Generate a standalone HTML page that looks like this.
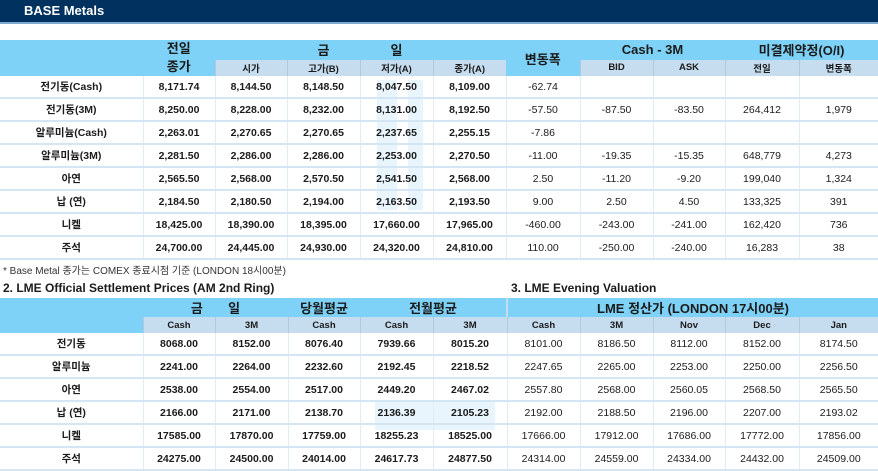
<!DOCTYPE html>
<html><head><meta charset="utf-8"><style>
body{margin:0;width:878px;height:467px;overflow:hidden;background:#fff;font-family:"Liberation Sans","Noto Sans CJK KR",sans-serif;color:#1b1b1b;position:relative}
.bar{position:absolute;left:0;top:0;width:878px;height:22px;background:#00315f;border-bottom:2px solid #7fa9d0}
.bar span{position:absolute;left:24px;top:3px;color:#fff;font-weight:bold;font-size:13px}
table{position:absolute;left:0;border-collapse:collapse;table-layout:fixed;font-size:10.5px}
td{text-align:center;padding:0;white-space:nowrap;overflow:hidden}
.h{background:#7fd2f7;font-weight:bold;font-size:13px}
.s{background:#c6dcef;font-weight:bold;font-size:9.5px;border-left:1px solid #b0c8e0}
tr.r td{height:21px;border-bottom:2px solid #d4e5f4;border-left:1px solid #e0ecf7}
tr.r td:first-child{border-left:none}
.b{font-weight:bold}
.t{position:absolute;font-weight:bold;font-size:12px}
.wm{position:absolute;background:#d8eefb;opacity:.6}
</style></head><body>
<div class="bar"><span>BASE Metals</span></div>
<div class="wm" style="left:377px;top:80px;width:20px;height:130px"></div>
<div class="wm" style="left:408px;top:80px;width:15px;height:130px"></div>
<div class="wm" style="left:375px;top:400px;width:120px;height:30px"></div>

<table style="top:40px;width:878px">
<colgroup><col style="width:143px"><col style="width:72px"><col style="width:72px"><col style="width:73px"><col style="width:73px"><col style="width:73px"><col style="width:74px"><col style="width:73px"><col style="width:72px"><col style="width:74px"><col style="width:79px"></colgroup>
<tr style="height:19px"><td class="h"></td><td class="h" rowspan="2" style="line-height:18px">전일<br>종가</td><td class="h"></td><td class="h">금</td><td class="h">일</td><td class="h"></td><td class="h" rowspan="2">변동폭</td><td class="h" colspan="2">Cash - 3M</td><td class="h" colspan="2">미결제약정(O/I)</td></tr>
<tr style="height:16px"><td class="h"></td><td class="s">시가</td><td class="s">고가(B)</td><td class="s">저가(A)</td><td class="s">종가(A)</td><td class="s">BID</td><td class="s">ASK</td><td class="s">전일</td><td class="s">변동폭</td></tr>
<tr class="r"><td class="b">전기동(Cash)</td><td class="b">8,171.74</td><td class="b">8,144.50</td><td class="b">8,148.50</td><td class="b">8,047.50</td><td class="b">8,109.00</td><td>-62.74</td><td></td><td></td><td></td><td></td></tr>
<tr class="r"><td class="b">전기동(3M)</td><td class="b">8,250.00</td><td class="b">8,228.00</td><td class="b">8,232.00</td><td class="b">8,131.00</td><td class="b">8,192.50</td><td>-57.50</td><td>-87.50</td><td>-83.50</td><td>264,412</td><td>1,979</td></tr>
<tr class="r"><td class="b">알루미늄(Cash)</td><td class="b">2,263.01</td><td class="b">2,270.65</td><td class="b">2,270.65</td><td class="b">2,237.65</td><td class="b">2,255.15</td><td>-7.86</td><td></td><td></td><td></td><td></td></tr>
<tr class="r"><td class="b">알루미늄(3M)</td><td class="b">2,281.50</td><td class="b">2,286.00</td><td class="b">2,286.00</td><td class="b">2,253.00</td><td class="b">2,270.50</td><td>-11.00</td><td>-19.35</td><td>-15.35</td><td>648,779</td><td>4,273</td></tr>
<tr class="r"><td class="b">아연</td><td class="b">2,565.50</td><td class="b">2,568.00</td><td class="b">2,570.50</td><td class="b">2,541.50</td><td class="b">2,568.00</td><td>2.50</td><td>-11.20</td><td>-9.20</td><td>199,040</td><td>1,324</td></tr>
<tr class="r"><td class="b">납 (연)</td><td class="b">2,184.50</td><td class="b">2,180.50</td><td class="b">2,194.00</td><td class="b">2,163.50</td><td class="b">2,193.50</td><td>9.00</td><td>2.50</td><td>4.50</td><td>133,325</td><td>391</td></tr>
<tr class="r"><td class="b">니켈</td><td class="b">18,425.00</td><td class="b">18,390.00</td><td class="b">18,395.00</td><td class="b">17,660.00</td><td class="b">17,965.00</td><td>-460.00</td><td>-243.00</td><td>-241.00</td><td>162,420</td><td>736</td></tr>
<tr class="r"><td class="b">주석</td><td class="b">24,700.00</td><td class="b">24,445.00</td><td class="b">24,930.00</td><td class="b">24,320.00</td><td class="b">24,810.00</td><td>110.00</td><td>-250.00</td><td>-240.00</td><td>16,283</td><td>38</td></tr>
</table>
<div style="position:absolute;left:3px;top:262px;font-size:10px;color:#333">* Base Metal 종가는 COMEX 종료시점 기준 (LONDON 18시00분)</div>
<div class="t" style="left:3px;top:281px">2. LME Official Settlement Prices (AM 2nd Ring)</div>
<div class="t" style="left:511px;top:281px">3. LME Evening Valuation</div>

<table style="top:298px;width:878px">
<colgroup><col style="width:143px"><col style="width:72px"><col style="width:73px"><col style="width:72px"><col style="width:73px"><col style="width:74px"><col style="width:73px"><col style="width:73px"><col style="width:72px"><col style="width:74px"><col style="width:79px"></colgroup>
<tr style="height:16px"><td class="h"></td><td class="h" colspan="2">금&nbsp;&nbsp;&nbsp;&nbsp;&nbsp;&nbsp;&nbsp;일</td><td class="h">당월평균</td><td class="h" colspan="2">전월평균</td><td class="h" colspan="5" style="border-left:2px solid #c6dcef">LME 정산가 (LONDON 17시00분)</td></tr>
<tr style="height:16px"><td class="h"></td><td class="s">Cash</td><td class="s">3M</td><td class="s">Cash</td><td class="s">Cash</td><td class="s">3M</td><td class="s">Cash</td><td class="s">3M</td><td class="s">Nov</td><td class="s">Dec</td><td class="s">Jan</td></tr>
<tr class="r"><td class="b">전기동</td><td class="b">8068.00</td><td class="b">8152.00</td><td class="b">8076.40</td><td class="b">7939.66</td><td class="b">8015.20</td><td>8101.00</td><td>8186.50</td><td>8112.00</td><td>8152.00</td><td>8174.50</td></tr>
<tr class="r"><td class="b">알루미늄</td><td class="b">2241.00</td><td class="b">2264.00</td><td class="b">2232.60</td><td class="b">2192.45</td><td class="b">2218.52</td><td>2247.65</td><td>2265.00</td><td>2253.00</td><td>2250.00</td><td>2256.50</td></tr>
<tr class="r"><td class="b">아연</td><td class="b">2538.00</td><td class="b">2554.00</td><td class="b">2517.00</td><td class="b">2449.20</td><td class="b">2467.02</td><td>2557.80</td><td>2568.00</td><td>2560.05</td><td>2568.50</td><td>2565.50</td></tr>
<tr class="r"><td class="b">납 (연)</td><td class="b">2166.00</td><td class="b">2171.00</td><td class="b">2138.70</td><td class="b">2136.39</td><td class="b">2105.23</td><td>2192.00</td><td>2188.50</td><td>2196.00</td><td>2207.00</td><td>2193.02</td></tr>
<tr class="r"><td class="b">니켈</td><td class="b">17585.00</td><td class="b">17870.00</td><td class="b">17759.00</td><td class="b">18255.23</td><td class="b">18525.00</td><td>17666.00</td><td>17912.00</td><td>17686.00</td><td>17772.00</td><td>17856.00</td></tr>
<tr class="r"><td class="b">주석</td><td class="b">24275.00</td><td class="b">24500.00</td><td class="b">24014.00</td><td class="b">24617.73</td><td class="b">24877.50</td><td>24314.00</td><td>24559.00</td><td>24334.00</td><td>24432.00</td><td>24509.00</td></tr>
</table>
</body></html>
